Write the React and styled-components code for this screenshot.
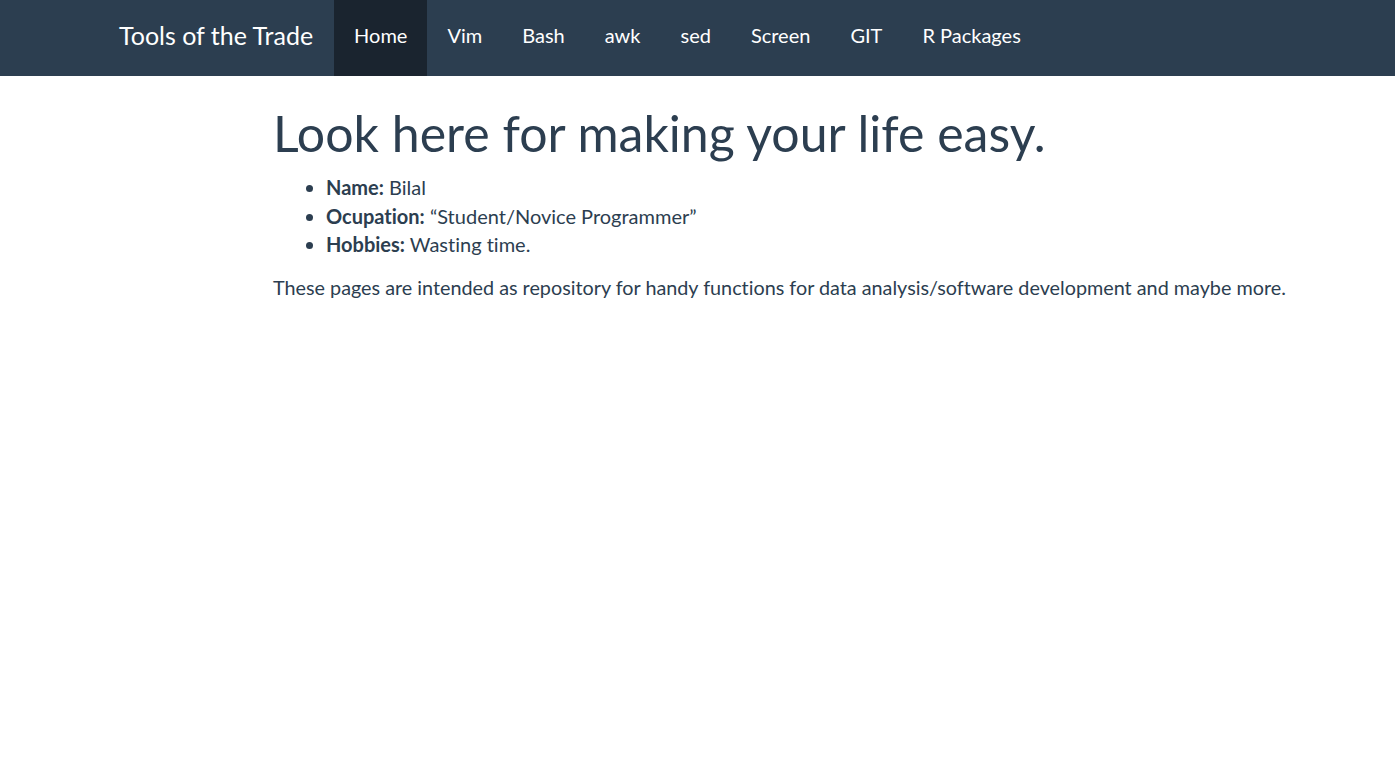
import React from 'react';
import styled, { createGlobalStyle } from 'styled-components';

const GlobalStyle = createGlobalStyle`
  body {
    margin: 0;
    font-family: Lato, "Liberation Sans", sans-serif;
    font-variant-ligatures: no-common-ligatures;
    color: #2c3e50;
    background: #fff;
  }
`;

const links = ['Home', 'Vim', 'Bash', 'awk', 'sed', 'Screen', 'GIT', 'R Packages'];

function App() {
  return (
    <>
      <GlobalStyle />
      <Navbar>
        <Brand href="#">Tools of the Trade</Brand>
        <NavList>
          {links.map((l, i) => (
            <NavItem key={l}>
              <NavLink href="#" active={i === 0 ? 1 : 0}>{l}</NavLink>
            </NavItem>
          ))}
        </NavList>
      </Navbar>
      <Main>
        <Title>Look here for making your life easy.</Title>
        <Facts>
          <li><b>Name:</b> Bilal</li>
          <li><b>Ocupation:</b> “Student/Novice Programmer”</li>
          <li><b>Hobbies:</b> Wasting time.</li>
        </Facts>
        <Para>These pages are intended as repository for handy functions for data analysis/software development and maybe more.</Para>
      </Main>
    </>
  );
}

const Navbar = styled.nav`
  display: flex;
  align-items: stretch;
  height: 76px;
  background: #2c3e50;
  padding-left: 119px;
`;

const Brand = styled.a`
  display: flex;
  align-items: center;
  padding: 0 21px 6px 0;
  font-size: 25px;
  color: #fff;
  text-decoration: none;
`;

const NavList = styled.ul`
  display: flex;
  list-style: none;
  margin: 0;
  padding: 0;
`;

const NavItem = styled.li`
  display: flex;
`;

const NavLink = styled.a`
  display: flex;
  align-items: center;
  padding: 0 20px 6px;
  font-size: 20px;
  color: #fff;
  text-decoration: none;
  background: ${p => (p.active ? '#1a242f' : 'transparent')};
`;

const Main = styled.main`
  padding: 0 0 0 273px;
`;

const Title = styled.h1`
  margin: 30px 0 12px;
  font-size: 50px;
  font-weight: 400;
  line-height: 1.1;
`;

const Facts = styled.ul`
  margin: 0 0 14px;
  padding-left: 53px;
  font-size: 20px;
  line-height: 28.5px;
  b { font-weight: 700; }
`;

const Para = styled.p`
  margin: 0;
  font-size: 19.8px;
  line-height: 28.5px;
`;

export default App;
